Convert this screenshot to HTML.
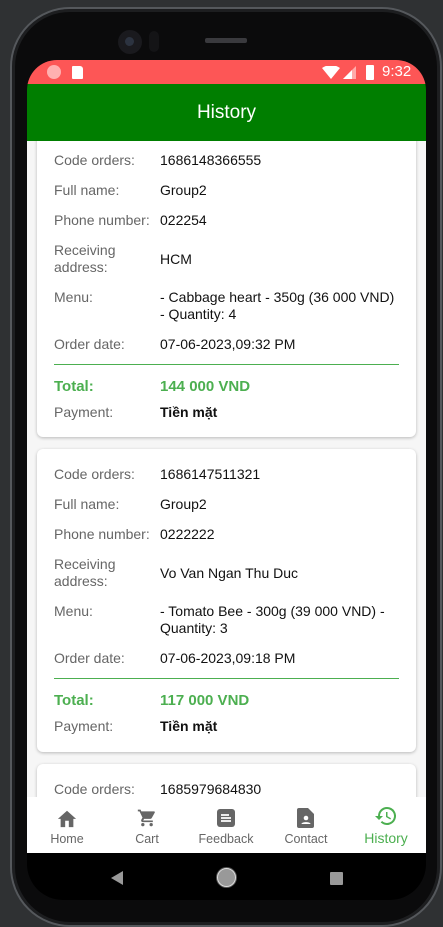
<!DOCTYPE html>
<html><head><meta charset="utf-8"><style>
*{margin:0;padding:0;box-sizing:border-box}
body{width:443px;height:923px;background:#2f3133;overflow:hidden;position:relative;font-family:"Liberation Sans",sans-serif}
.phone{position:absolute;left:10px;top:7px;width:432px;height:920px;background:#0b0b0c;border-radius:60px;border:2px solid #55585c;box-shadow:inset 0 0 0 3px #1d1e20}
.screen{position:absolute;left:27px;top:60px;width:399px;height:840px;background:#000;border-radius:30px 30px 36px 36px;overflow:hidden}
.status{position:absolute;left:0;top:0;width:399px;height:24px;background:#fd5656;color:#fff;font-size:14px}
.appbar{position:absolute;left:0;top:24px;width:399px;height:57px;background:#007e00;color:#fff;font-size:19px;text-align:center;line-height:57px}
.content{position:absolute;left:0;top:81px;width:399px;height:656px;background:#f6f6f6;overflow:hidden}
.card{position:absolute;left:10px;width:379px;background:#fff;border-radius:6px;box-shadow:0 1px 3px rgba(0,0,0,.25)}
.r{position:absolute;font-size:14px;line-height:17px;color:#111}
.l{left:17px;color:#666}
.v{left:123px;width:250px}
.hr{position:absolute;left:17px;width:345px;height:1px;background:#4caf50}
.tot{color:#4caf50;font-weight:bold;font-size:15px}
.b{font-weight:bold}
.nav{position:absolute;left:0;top:737px;width:399px;height:56px;background:#fff}
.it{position:absolute;top:0;width:80px;text-align:center;font-size:12.5px;color:#666}
.it svg{display:block;margin:11px auto 4px}
</style></head><body>
<div class="phone"></div>
<div style="position:absolute;left:118px;top:30px;width:24px;height:24px;border-radius:50%;background:#1a1a1e"></div>
<div style="position:absolute;left:125px;top:37px;width:9px;height:9px;border-radius:50%;background:#2c3340"></div>
<div style="position:absolute;left:149px;top:31px;width:10px;height:21px;border-radius:5px;background:#141416"></div>
<div style="position:absolute;left:205px;top:38px;width:42px;height:5px;border-radius:2px;background:#3a3a3e"></div>
<div class="screen">
 <div class="status">
  <div style="position:absolute;left:20px;top:5px;width:14px;height:14px;border-radius:50%;background:#ffb0b0"></div>
  <div style="position:absolute;left:45px;top:6px;width:11px;height:13px;background:#fff;border-radius:1px 3px 1px 1px"></div>
  <svg style="position:absolute;left:295px;top:6px" width="18" height="13"><path d="M0 2Q9-4 18 2L9 13Z" fill="#fff"/></svg>
  <svg style="position:absolute;left:316px;top:6px" width="13" height="13"><path d="M13 0V13H0Z" fill="#ffaaaa"/><path d="M9 4V13H0Z" fill="#fff"/></svg>
  <div style="position:absolute;left:339px;top:5px;width:8px;height:15px;background:#fff;border-radius:1px"></div>
  <div style="position:absolute;left:355px;top:3px;font-size:15px">9:32</div>
 </div>
 <div class="appbar">History</div>
 <div class="content">
  <div class="card" style="top:-10px;height:306px">
   <div class="r l" style="top:21px">Code orders:</div><div class="r v" style="top:21px">1686148366555</div>
   <div class="r l" style="top:51px">Full name:</div><div class="r v" style="top:51px">Group2</div>
   <div class="r l" style="top:81px">Phone number:</div><div class="r v" style="top:81px">022254</div>
   <div class="r l" style="top:111px">Receiving<br>address:</div><div class="r v" style="top:120px">HCM</div>
   <div class="r l" style="top:158px">Menu:</div><div class="r v" style="top:158px">- Cabbage heart - 350g (36 000 VND)<br>- Quantity: 4</div>
   <div class="r l" style="top:205px">Order date:</div><div class="r v" style="top:205px">07-06-2023,09:32 PM</div>
   <div class="hr" style="top:233px"></div>
   <div class="r l tot" style="top:247px">Total:</div><div class="r v tot" style="top:247px">144 000 VND</div>
   <div class="r l" style="top:273px">Payment:</div><div class="r v b" style="top:273px">Tiền mặt</div>
  </div>
  <div class="card" style="top:308px;height:303px">
   <div class="r l" style="top:17px">Code orders:</div><div class="r v" style="top:17px">1686147511321</div>
   <div class="r l" style="top:47px">Full name:</div><div class="r v" style="top:47px">Group2</div>
   <div class="r l" style="top:77px">Phone number:</div><div class="r v" style="top:77px">0222222</div>
   <div class="r l" style="top:107px">Receiving<br>address:</div><div class="r v" style="top:116px">Vo Van Ngan Thu Duc</div>
   <div class="r l" style="top:154px">Menu:</div><div class="r v" style="top:154px">- Tomato Bee - 300g (39 000 VND) -<br>Quantity: 3</div>
   <div class="r l" style="top:201px">Order date:</div><div class="r v" style="top:201px">07-06-2023,09:18 PM</div>
   <div class="hr" style="top:229px"></div>
   <div class="r l tot" style="top:243px">Total:</div><div class="r v tot" style="top:243px">117 000 VND</div>
   <div class="r l" style="top:269px">Payment:</div><div class="r v b" style="top:269px">Tiền mặt</div>
  </div>
  <div class="card" style="top:623px;height:100px">
   <div class="r l" style="top:17px">Code orders:</div><div class="r v" style="top:17px">1685979684830</div>
  </div>
 </div>
 <div class="nav">
  <div class="it" style="left:0"><svg width="22" height="20" viewBox="0 0 24 22"><path d="M10 21v-7h4v7h5v-9h3L12 3 2 12h3v9z" fill="#666"/></svg>Home</div>
  <div class="it" style="left:80px"><svg width="22" height="20" viewBox="0 0 24 24"><path d="M7 18a2 2 0 1 0 0 4 2 2 0 0 0 0-4zM1 2v2h2l3.6 7.6-1.4 2.4A2 2 0 0 0 7 17h12v-2H7.4l1.1-2h7.5a2 2 0 0 0 1.7-1l3.6-6.5A1 1 0 0 0 20.4 4H5.2l-.9-2zm16 16a2 2 0 1 0 0 4 2 2 0 0 0 0-4z" fill="#666"/></svg>Cart</div>
  <div class="it" style="left:159px"><svg width="20" height="20" viewBox="0 0 20 20"><rect x="1" y="1" width="18" height="18" rx="3" fill="#666"/><path d="M5 7h8M5 10h10M5 13h10" stroke="#fff" stroke-width="1.8"/></svg>Feedback</div>
  <div class="it" style="left:239px"><svg width="18" height="20" viewBox="0 0 18 20"><path d="M2 0h9l6 6v12a2 2 0 0 1-2 2H2a2 2 0 0 1-2-2V2a2 2 0 0 1 2-2z" fill="#666"/><circle cx="9" cy="10" r="2.3" fill="#fff"/><path d="M4.5 16c0-2.5 9-2.5 9 0z" fill="#fff"/></svg>Contact</div>
  <div class="it" style="left:319px;color:#4caf50;font-size:14px"><svg style="margin:8px auto 3px" width="24" height="22" viewBox="0 0 24 22"><path d="M13 2a9 9 0 0 0-9 9H1l4 4 4-4H6a7 7 0 1 1 2.1 5l-1.4 1.4A9 9 0 1 0 13 2zm-1 5v5l4.3 2.5.7-1.2-3.5-2.1V7z" fill="#4caf50"/></svg>History</div>
 </div>
 <svg style="position:absolute;left:84px;top:811px" width="12" height="14"><path d="M12 0V14L0 7Z" fill="#999"/></svg>
 <div style="position:absolute;left:190px;top:808px;width:19px;height:19px;border-radius:50%;background:#999;border:1.5px solid #ddd;box-shadow:0 0 0 1px #555"></div>
 <div style="position:absolute;left:303px;top:812px;width:13px;height:13px;background:#999;border-radius:1px"></div>
</div>
</body></html>
